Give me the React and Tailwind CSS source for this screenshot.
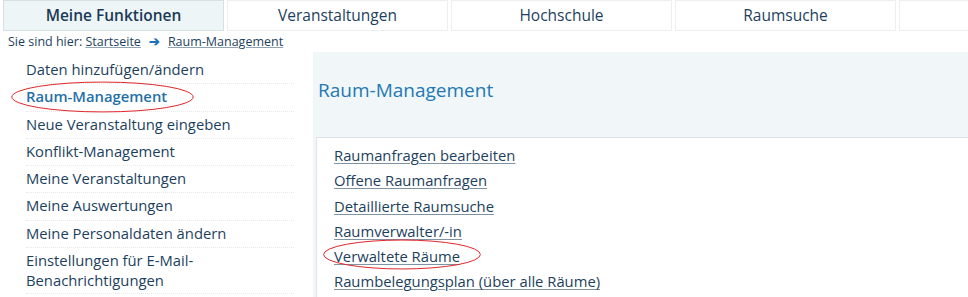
import React from 'react';

const tabs = ['Meine Funktionen', 'Veranstaltungen', 'Hochschule', 'Raumsuche', ''];

const sideItems = [
    { label: 'Daten hinzufügen/ändern' },
    { label: 'Raum-Management', active: true },
    { label: 'Neue Veranstaltung eingeben' },
    { label: 'Konflikt-Management' },
    { label: 'Meine Veranstaltungen' },
    { label: 'Meine Auswertungen' },
    { label: 'Meine Personaldaten ändern' },
    { label: 'Einstellungen für E-Mail-Benachrichtigungen' },
];

const links = [
    'Raumanfragen bearbeiten',
    'Offene Raumanfragen',
    'Detaillierte Raumsuche',
    'Raumverwalter/-in',
    'Verwaltete Räume',
    'Raumbelegungsplan (über alle Räume)',
];

// rote Markierung um einen Eintrag
function Ellipse({ className }) {
    return (
        <svg className={`absolute pointer-events-none ${className}`} viewBox="0 0 100 30" preserveAspectRatio="none">
            <ellipse cx="50" cy="15" rx="49" ry="14" fill="none" stroke="#e0262b" strokeWidth="1" vectorEffect="non-scaling-stroke" />
        </svg>
    );
}

export default function App() {
    return (
        <div className="w-[968px] h-[297px] overflow-hidden bg-white text-[#1d3f5e]" style={{ fontFamily: '"Open Sans", "Liberation Sans", sans-serif' }}>
            <div className="flex gap-[3px] pl-[3px]">
                {tabs.map((t, i) => (
                    <div
                        key={i}
                        className={`w-[221px] h-[31px] shrink-0 flex items-center justify-center text-[15.5px] border ${i === 0 ? 'bg-[#eef5f6] border-[#d9e0e3] font-semibold text-[#1b3a57]' : 'bg-white border-[#eceff1]'}`}
                    >
                        {t}
                    </div>
                ))}
            </div>

            <div className="pl-[8px] pt-[1px] text-[12.5px] h-[21px] leading-[20px] text-[#1d3f5e]">
                Sie sind hier: <span className="underline decoration-[#8fa3b3]">Startseite</span>
                <span className="mx-[8px] font-bold text-[#1f73b7]">➔</span>
                <span className="underline decoration-[#8fa3b3]">Raum-Management</span>
            </div>

            <div className="flex">
                <div className="relative w-[313px] shrink-0 pl-[26px] pr-[19px] pt-[5px]">
                    {sideItems.map((it) => (
                        <div
                            key={it.label}
                            className={`min-h-[27.3px] py-[3px] leading-[19.5px] text-[14.8px] border-b border-dotted border-[#e6eaec] ${it.active ? 'text-[#2470a9] font-semibold' : ''}`}
                        >
                            {it.label}
                        </div>
                    ))}
                    <Ellipse className="left-[10px] top-[29px] w-[185px] h-[32px]" />
                </div>

                <div className="flex-1 bg-[#f1f7f8] pl-[3px] pt-[1px]">
                    <h1 className="h-[74px] mb-[10px] pl-[2px] flex items-center text-[19px] text-[#2378b5]">Raum-Management</h1>
                    <div className="relative bg-white border-l border-t border-[#dfe3e5] h-[200px] pl-[17px] pt-[5px]">
                        {links.map((l) => (
                            <div key={l} className="h-[25.3px] leading-[25px] text-[14.8px]">
                                <span className="underline decoration-[#7f93a3] underline-offset-2">{l}</span>
                            </div>
                        ))}
                        <Ellipse className="left-[5px] top-[101px] w-[160px] h-[31px]" />
                    </div>
                </div>
            </div>
        </div>
    );
}
